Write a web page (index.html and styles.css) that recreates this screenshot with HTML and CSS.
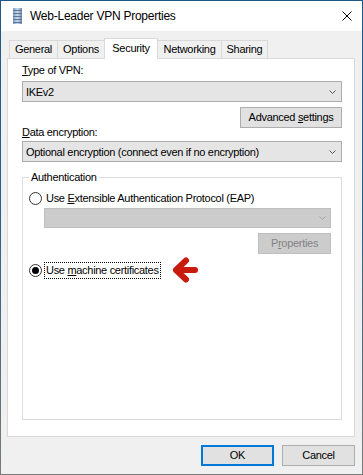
FILE: index.html
```html
<!DOCTYPE html>
<html lang="en">
<head>
    <meta charset="UTF-8">
    <meta name="viewport" content="width=device-width, initial-scale=1.0">
    <title>Web-Leader VPN Properties</title>
    <link rel="stylesheet" href="styles.css">
</head>
<body>

<div class="window">
    <div class="titlebar">
        <svg class="app-icon" width="9" height="16" viewBox="0 0 9 16">
            <defs>
                <linearGradient id="book" x1="0" x2="1" y1="0" y2="0">
                    <stop offset="0" stop-color="#7f9dbd"/>
                    <stop offset="0.5" stop-color="#c9d8ea"/>
                    <stop offset="1" stop-color="#6c88a8"/>
                </linearGradient>
            </defs>
            <rect x="0" y="0" width="9" height="16" fill="url(#book)"/>
            <rect x="0" y="2" width="9" height="1" fill="#5a7595"/>
            <rect x="0" y="5" width="9" height="1" fill="#5a7595"/>
            <rect x="0" y="8" width="9" height="1" fill="#5a7595"/>
            <rect x="0" y="11" width="9" height="1" fill="#5a7595"/>
            <rect x="0" y="14" width="9" height="1" fill="#5a7595"/>
        </svg>
        <span class="title">Web-Leader VPN Properties</span>
        <svg class="close" width="10" height="10" viewBox="0 0 10 10">
            <path d="M0.5 0.5 L9.5 9.5 M9.5 0.5 L0.5 9.5" stroke="#000" stroke-width="1"/>
        </svg>
    </div>

    <div class="client">
        <div class="tabs">
            <div class="tab tab-general">General</div>
            <div class="tab tab-options">Options</div>
            <div class="tab tab-security selected">Security</div>
            <div class="tab tab-networking">Networking</div>
            <div class="tab tab-sharing">Sharing</div>
        </div>

        <div class="panel">
            <div class="label"><u>T</u>ype of VPN:</div>
            <div class="combo combo-vpn">
                <span>IKEv2</span>
                <svg class="chevron" width="7" height="4" viewBox="0 0 7 4"><polyline points="0.5,0.5 3.5,3.5 6.5,0.5" fill="none" stroke="#555" stroke-width="1"/></svg>
            </div>
            <div class="btn-row">
                <button class="btn btn-advanced">Advanced <u>s</u>ettings</button>
            </div>
            <div class="label label-data"><u>D</u>ata encryption:</div>
            <div class="combo">
                <span>Optional encryption (connect even if no encryption)</span>
                <svg class="chevron" width="7" height="4" viewBox="0 0 7 4"><polyline points="0.5,0.5 3.5,3.5 6.5,0.5" fill="none" stroke="#555" stroke-width="1"/></svg>
            </div>

            <fieldset class="group">
                <legend>Authentication</legend>
                <div class="radio-row radio-eap">
                    <svg class="radio" width="13" height="13" viewBox="0 0 13 13"><circle cx="6.5" cy="6.5" r="6" fill="#fff" stroke="#333"/></svg>
                    <span class="radio-label">Use <u>E</u>xtensible Authentication Protocol (EAP)</span>
                </div>
                <div class="combo disabled">
                    <span></span>
                    <svg class="chevron" width="7" height="4" viewBox="0 0 7 4"><polyline points="0.5,0.5 3.5,3.5 6.5,0.5" fill="none" stroke="#a6a6a6" stroke-width="1"/></svg>
                </div>
                <div class="btn-row">
                    <button class="btn btn-properties" disabled>P<u>r</u>operties</button>
                </div>
                <div class="radio-row radio-machine">
                    <svg class="radio" width="13" height="13" viewBox="0 0 13 13"><circle cx="6.5" cy="6.5" r="6" fill="#fff" stroke="#333"/><circle cx="6.5" cy="6.5" r="3.5" fill="#000"/></svg>
                    <span class="radio-label focused">Use <u>m</u>achine certificates</span>
                    <!-- annotation arrow -->
                    <svg class="arrow" width="28" height="28" viewBox="0 0 28 28">
                        <path d="M15 4.5 L5 14 L15 23.5 M5 14 H24" fill="none" stroke="#c81b0e" stroke-width="6" stroke-linecap="round" stroke-linejoin="round"/>
                    </svg>
                </div>
            </fieldset>
        </div>

        <div class="dialog-buttons">
            <button class="btn btn-default">OK</button>
            <button class="btn">Cancel</button>
        </div>
    </div>
</div>

</body>
</html>
```

FILE: styles.css
```css
* {
    box-sizing: border-box;
}
body {
    margin: 0;
    font-family: "Liberation Sans", Arial, sans-serif;
    font-size: 11px;
    letter-spacing: -0.3px;
    color: #000;
    background: #fff;
}
.window {
    width: 363px;
    height: 475px;
    border: 1px solid;
    border-image: linear-gradient(#1d5886, #2a5f86 45%, #7a7a7a) 1;
    background: #f0f0f0;
    display: flex;
    flex-direction: column;
}
.titlebar {
    height: 30px;
    background: #fff;
    display: flex;
    align-items: center;
    padding: 0 10px 0 12px;
}
.app-icon {
    display: block;
}
.title {
    font-size: 12px;
    letter-spacing: -0.25px;
    margin-left: 8px;
    flex: 1;
}
.close {
    display: block;
}
.client {
    flex: 1;
    padding: 7px 7px 0 6px;
}
.tabs {
    display: flex;
    align-items: flex-end;
    height: 20px;
    padding-left: 2px;
}
.tab {
    height: 18px;
    border: 1px solid #d9d9d9;
    border-bottom: none;
    margin-left: -1px;
    background: #f0f0f0;
    text-align: center;
    line-height: 17px;
}
.tab:first-child {
    margin-left: 0;
}
.tab-general { width: 49px; }
.tab-options { width: 48px; }
.tab-security { width: 54px; }
.tab-networking { width: 65px; }
.tab-sharing { width: 47px; }
.tab.selected {
    height: 21px;
    margin-bottom: -1px;
    background: #fff;
    position: relative;
    z-index: 1;
    line-height: 18px;
}
.panel {
    height: 379px;
    background: #fff;
    border: 1px solid #d9d9d9;
    padding: 4px 12px 0 14px;
}
.label {
    line-height: 15px;
}
.label-data {
    margin-top: -3px;
}
.combo {
    height: 21px;
    margin-top: 3px;
    background: #e5e5e5;
    border: 1px solid #acacac;
    display: flex;
    align-items: center;
    justify-content: space-between;
    padding: 0 5px 0 3px;
}
.label-data + .combo {
    margin-top: 1px;
}
.combo .chevron {
    display: block;
}
.combo.disabled {
    height: 20px;
    margin: 1px 0 0 15px;
    background: #cccccc;
    border-color: #bfbfbf;
    padding-right: 4px;
}
.btn-row {
    display: flex;
    justify-content: flex-end;
    margin-top: 5px;
}
.btn {
    font: inherit;
    letter-spacing: inherit;
    color: #000;
    height: 21px;
    width: 73px;
    padding: 0;
    background: #e1e1e1;
    border: 1px solid #adadad;
    text-align: center;
    line-height: 19px;
}
.btn-advanced {
    width: 102px;
}
.btn-properties {
    color: #838383;
    background: #cccccc;
    border-color: #bfbfbf;
}
.group {
    margin: 8px 0 0;
    padding: 0 10px 0 6px;
    min-width: 0;
    height: 250px;
    border: 1px solid #dcdcdc;
}
.group legend {
    padding: 0 2px;
    line-height: 15px;
}
.radio-row {
    display: flex;
    align-items: center;
}
.radio-eap {
    margin-top: 5px;
}
.radio-machine {
    margin-top: 2px;
}
.radio {
    display: block;
}
.radio-label {
    margin-left: 2px;
    border: 1px dotted transparent;
    padding: 0 1px 0 1px;
    line-height: 15px;
}
.radio-label.focused {
    border-color: #000;
}
.arrow {
    display: block;
    margin-left: 10px;
}
.dialog-buttons {
    display: flex;
    justify-content: flex-end;
    gap: 8px;
    margin-top: 8px;
}
.btn-default {
    border: 2px solid #0078d7;
    line-height: 17px;
}
```
